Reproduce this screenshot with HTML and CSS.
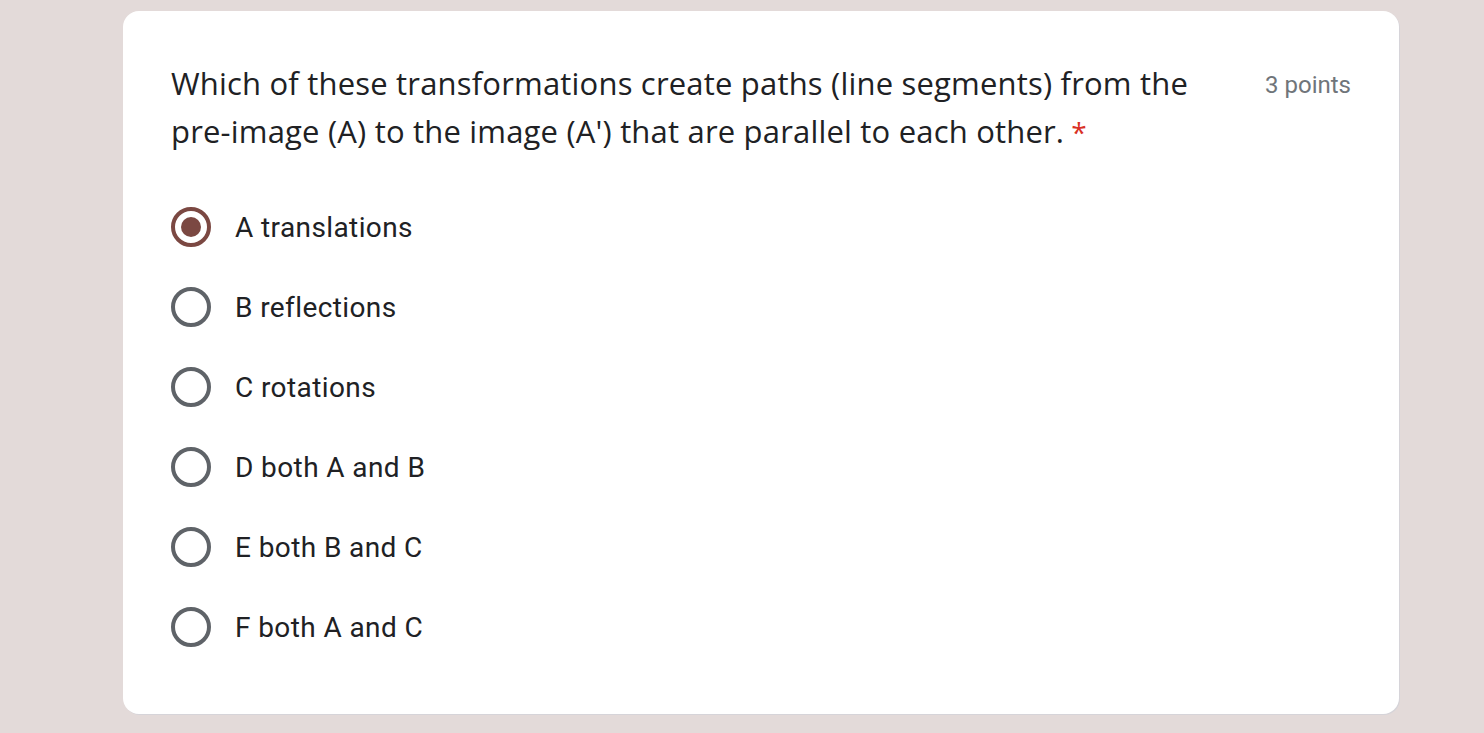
FILE: index.html
```html
<!DOCTYPE html>
<html>
<head>
<meta charset="utf-8">
<link rel="stylesheet" href="styles.css">
</head>
<body>
<div class="page">
  <div class="card">
    <div class="header">
      <div class="title">Which of these transformations create paths (line segments) from the pre-image (A) to the image (A') that are parallel to each other.<span class="req">*</span></div>
      <div class="points">3 points</div>
    </div>
    <div class="options">
      <div class="option"><span class="radio checked"><span class="dot"></span></span><span class="label">A translations</span></div>
      <div class="option"><span class="radio"></span><span class="label">B reflections</span></div>
      <div class="option"><span class="radio"></span><span class="label">C rotations</span></div>
      <div class="option"><span class="radio"></span><span class="label">D both A and B</span></div>
      <div class="option"><span class="radio"></span><span class="label">E both B and C</span></div>
      <div class="option"><span class="radio"></span><span class="label">F both A and C</span></div>
    </div>
  </div>
</div>
</body>
</html>
```
FILE: styles.css
```css
html, body {
  margin: 0;
  padding: 0;
  background: #e3dad9;
  height: 100%;
}
.page {
  padding: 11px 0 0 123px;
}
.card {
  box-sizing: border-box;
  width: 1276px;
  height: 703px;
  background: #fff;
  border-radius: 16px;
  box-shadow: 1px 1px 0 #d6d4d9;
  padding: 48px 48px 48px 48px;
}
.header {
  display: flex;
  align-items: flex-start;
  height: 96px;
}
.title {
  flex: 1;
  font-family: "Open Sans", sans-serif;
  font-size: 31px;
  line-height: 48px;
  color: #202124;
  letter-spacing: 0.19px;
}
.req {
  color: #d93025;
  margin-left: 7px;
  font-size: 28px;
  line-height: 1;
}
.points {
  margin-left: 48px;
  margin-top: 10px;
  font-family: Roboto, sans-serif;
  font-size: 24px;
  line-height: 32px;
  color: #70757a;
  white-space: nowrap;
}
.options {
  margin-top: 32px;
  display: flex;
  flex-direction: column;
}
.option {
  display: flex;
  align-items: center;
  height: 80px;
}
.radio {
  box-sizing: border-box;
  width: 40px;
  height: 40px;
  border: 4px solid #5f6368;
  border-radius: 50%;
  display: flex;
  align-items: center;
  justify-content: center;
}
.radio.checked {
  border-color: #7b4842;
}
.dot {
  width: 20px;
  height: 20px;
  border-radius: 50%;
  background: #7b4842;
}
.label {
  margin-left: 24px;
  font-family: Roboto, sans-serif;
  font-size: 28px;
  color: #202124;
  letter-spacing: 0.4px;
}
```
